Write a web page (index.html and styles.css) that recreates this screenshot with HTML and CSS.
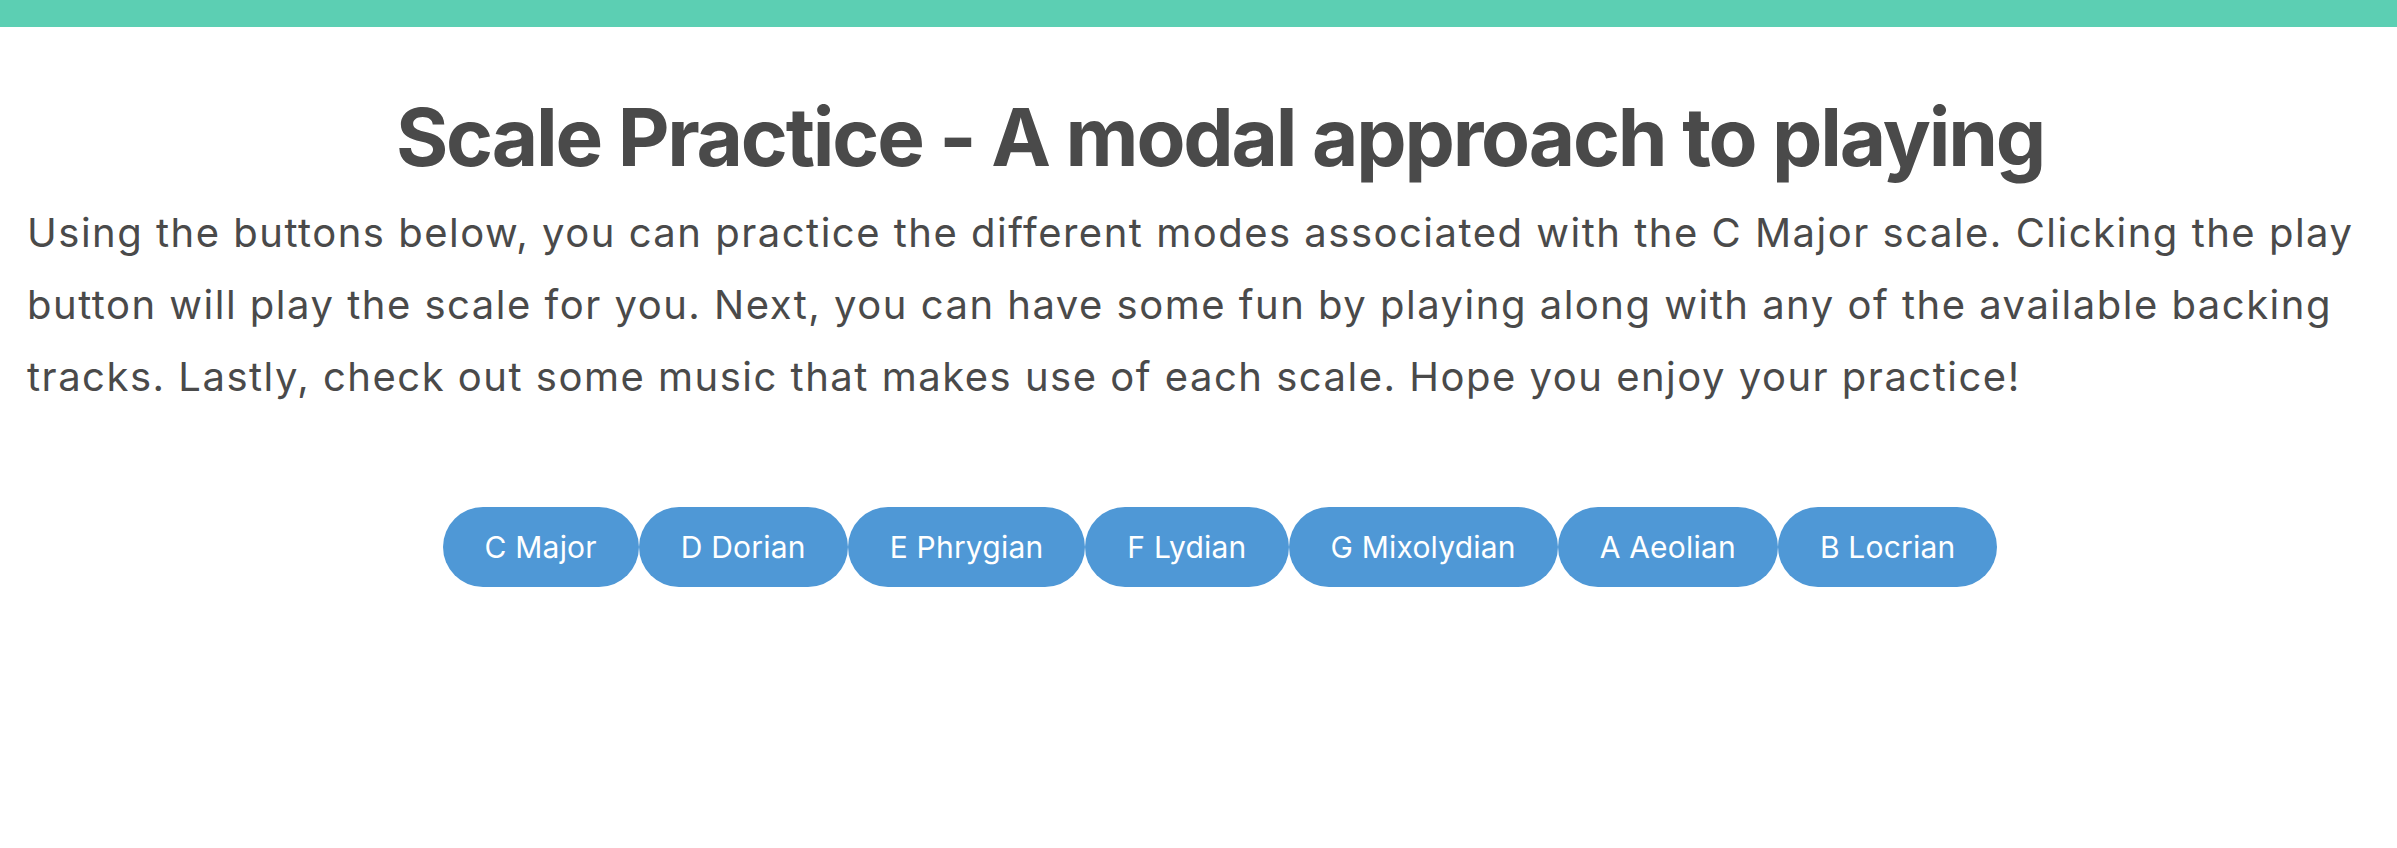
FILE: index.html
```html
<!DOCTYPE html>
<html lang="en">
<head>
<meta charset="utf-8">
<title>Scale Practice</title>
<link rel="stylesheet" href="styles.css">
</head>
<body>
<div class="topbar"></div>
<main class="page">
  <h1 class="title">Scale Practice - A modal approach to playing</h1>
  <p class="intro">Using the buttons below, you can practice the different modes associated with the C Major scale. Clicking the play button will play the scale for you. Next, you can have some fun by playing along with any of the available backing tracks. Lastly, check out some music that makes use of each scale. Hope you enjoy your practice!</p>
  <div class="modes">
    <button class="mode">C Major</button>
    <button class="mode">D Dorian</button>
    <button class="mode">E Phrygian</button>
    <button class="mode">F Lydian</button>
    <button class="mode">G Mixolydian</button>
    <button class="mode">A Aeolian</button>
    <button class="mode">B Locrian</button>
  </div>
</main>
</body>
</html>
```

FILE: styles.css
```css
html, body {
  margin: 0;
  padding: 0;
  background: #ffffff;
}
body {
  font-family: Inter, "Noto Sans", sans-serif;
  color: #4a4a4a;
}
.topbar {
  height: 27px;
  background: #5ccfb3;
}
.page {
  display: flex;
  flex-direction: column;
  padding: 0 27px 0 27px;
}
.title {
  margin: 62px 0 0 43px;
  font-size: 80px;
  line-height: 96px;
  font-weight: 700;
  text-align: center;
  letter-spacing: -2.2px;
  color: #4a4a4a;
}
.intro {
  margin: 12px 0 0 0;
  font-size: 40px;
  line-height: 72px;
  font-weight: 400;
  letter-spacing: 1.5px;
}
.modes {
  display: flex;
  justify-content: center;
  margin: 94px 0 0 43px;
}
.mode {
  height: 80px;
  padding: 0 42px;
  border: none;
  border-radius: 40px;
  background: #4f98d6;
  color: #ffffff;
  font-family: Inter, "Noto Sans", sans-serif;
  font-size: 30px;
  line-height: 80px;
  font-weight: 400;
  letter-spacing: 0.2px;
  cursor: pointer;
}
```
